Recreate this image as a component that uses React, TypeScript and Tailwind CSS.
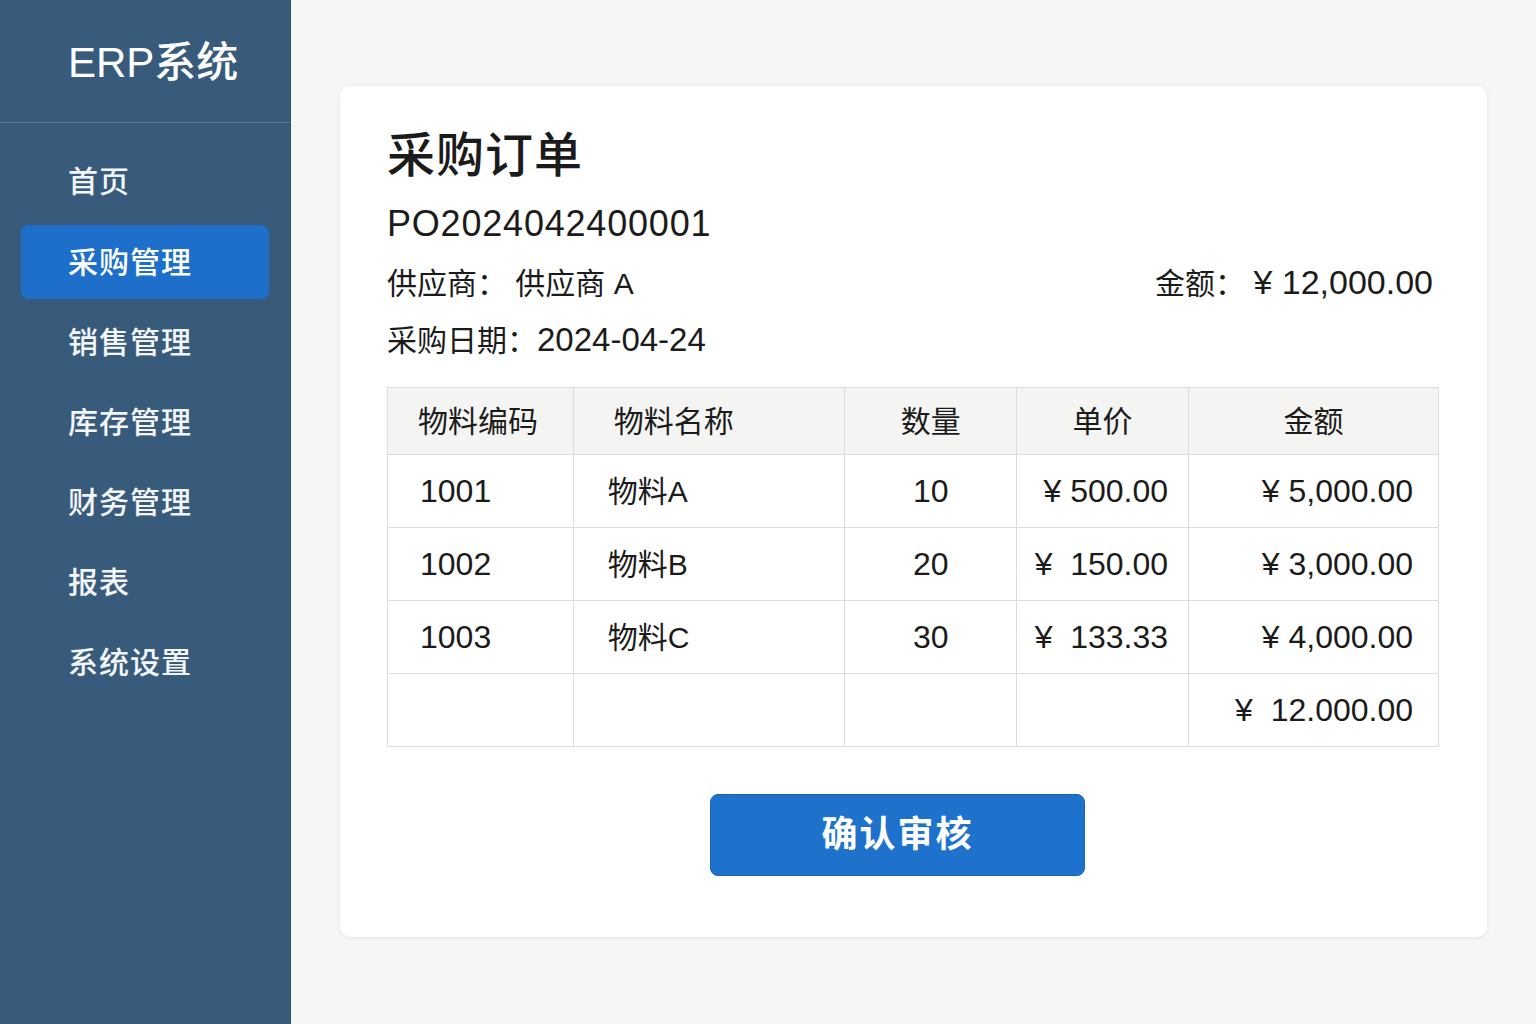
import React from 'react'

const navItems = ['首页', '采购管理', '销售管理', '库存管理', '财务管理', '报表', '系统设置']

const rows = [
    { code: '1001', name: '物料A', qty: '10', price: '¥ 500.00', amount: '¥ 5,000.00' },
    { code: '1002', name: '物料B', qty: '20', price: '¥ 150.00', amount: '¥ 3,000.00' },
    { code: '1003', name: '物料C', qty: '30', price: '¥ 133.33', amount: '¥ 4,000.00' },
]

const App = () => {
    return (
        <div
            className="flex h-[1024px] w-[1536px] overflow-hidden bg-[#f6f6f4] text-[#1b1b1b]"
            style={{ fontFamily: '"Liberation Sans", "Noto Sans CJK SC", sans-serif' }}
        >
            <aside className="w-[291px] shrink-0 bg-[#385b7b] border-r border-[#2f4f6c]">
                <div className="h-[123px] border-b border-[#56769a] pl-[68px] pt-[33px]">
                    <div className="text-[42px] leading-[60px] font-medium text-white">ERP系统</div>
                </div>
                <nav className="px-[21px] pt-[22px] flex flex-col gap-[7px]">
                    {navItems.map((item) => (
                        <div
                            key={item}
                            className={
                                item === '采购管理'
                                    ? 'h-[74px] rounded-lg bg-[#1e6fca] pl-[47px] flex items-center text-[30px] font-medium text-white tracking-[1px]'
                                    : 'h-[73px] pl-[47px] flex items-center text-[30px] font-medium text-[#f3f6f9] tracking-[1px]'
                            }
                        >
                            {item}
                        </div>
                    ))}
                </nav>
            </aside>

            <main className="flex-1 min-w-0 pl-[49px] pr-[49px] pt-[86px]">
                <div className="h-[851px] rounded-[10px] bg-white shadow-[0_1px_4px_rgba(0,0,0,0.08)] pl-[47px] pr-[48px] pt-[38px]">
                    <h1 className="text-[48px] leading-[64px] font-medium tracking-[1px]">采购订单</h1>
                    <div className="mt-[11px] text-[36px] leading-[50px] tracking-[0.8px]">PO2024042400001</div>
                    <div className="mt-[8px] flex justify-between items-baseline text-[30px] leading-[50px]">
                        <span>供应商：&nbsp;供应商 A</span>
                        <span className="mr-[6px]">
                            金额：&nbsp;<span className="text-[34px]">¥ 12,000.00</span>
                        </span>
                    </div>
                    <div className="mt-[6px] text-[30px] leading-[50px]">
                        采购日期：<span className="text-[33px]">2024-04-24</span>
                    </div>

                    <table className="mt-[21px] w-[1052px] border-collapse text-[32px]">
                        <colgroup>
                            <col className="w-[186px]" />
                            <col className="w-[272px]" />
                            <col className="w-[172px]" />
                            <col className="w-[172px]" />
                            <col className="w-[250px]" />
                        </colgroup>
                        <thead>
                            <tr className="h-[67px] bg-[#f4f4f2] text-[30px]">
                                <th className="border border-[#dcdcdc] text-left pl-[30px] font-normal">物料编码</th>
                                <th className="border border-[#dcdcdc] text-left pl-[40px] font-normal">物料名称</th>
                                <th className="border border-[#dcdcdc] text-center font-normal">数量</th>
                                <th className="border border-[#dcdcdc] text-center font-normal">单价</th>
                                <th className="border border-[#dcdcdc] text-center font-normal">金额</th>
                            </tr>
                        </thead>
                        <tbody>
                            {rows.map((r, i) => (
                                <tr key={r.code} className="h-[73px]">
                                    <td className="border border-[#dcdcdc] pl-[32px]">{r.code}</td>
                                    <td className="border border-[#dcdcdc] pl-[34px] text-[30px]">{r.name}</td>
                                    <td className="border border-[#dcdcdc] text-center">{r.qty}</td>
                                    <td className="border border-[#dcdcdc] text-right pr-[20px] whitespace-pre">
                                        {i === 0 ? r.price : r.price.replace('¥ ', '¥  ')}
                                    </td>
                                    <td className="border border-[#dcdcdc] text-right pr-[25px]">{r.amount}</td>
                                </tr>
                            ))}
                            <tr className="h-[73px]">
                                <td className="border border-[#dcdcdc]" />
                                <td className="border border-[#dcdcdc]" />
                                <td className="border border-[#dcdcdc]" />
                                <td className="border border-[#dcdcdc]" />
                                <td className="border border-[#dcdcdc] text-right pr-[25px]">¥&nbsp;&nbsp;12.000.00</td>
                            </tr>
                        </tbody>
                    </table>

                    <button className="mt-[47px] ml-[323px] w-[375px] h-[82px] rounded-lg bg-[#1e72cc] border border-[#1a66b8] text-white text-[36px] font-bold tracking-[2px]">
                        确认审核
                    </button>
                </div>
            </main>
        </div>
    )
}

export default App
